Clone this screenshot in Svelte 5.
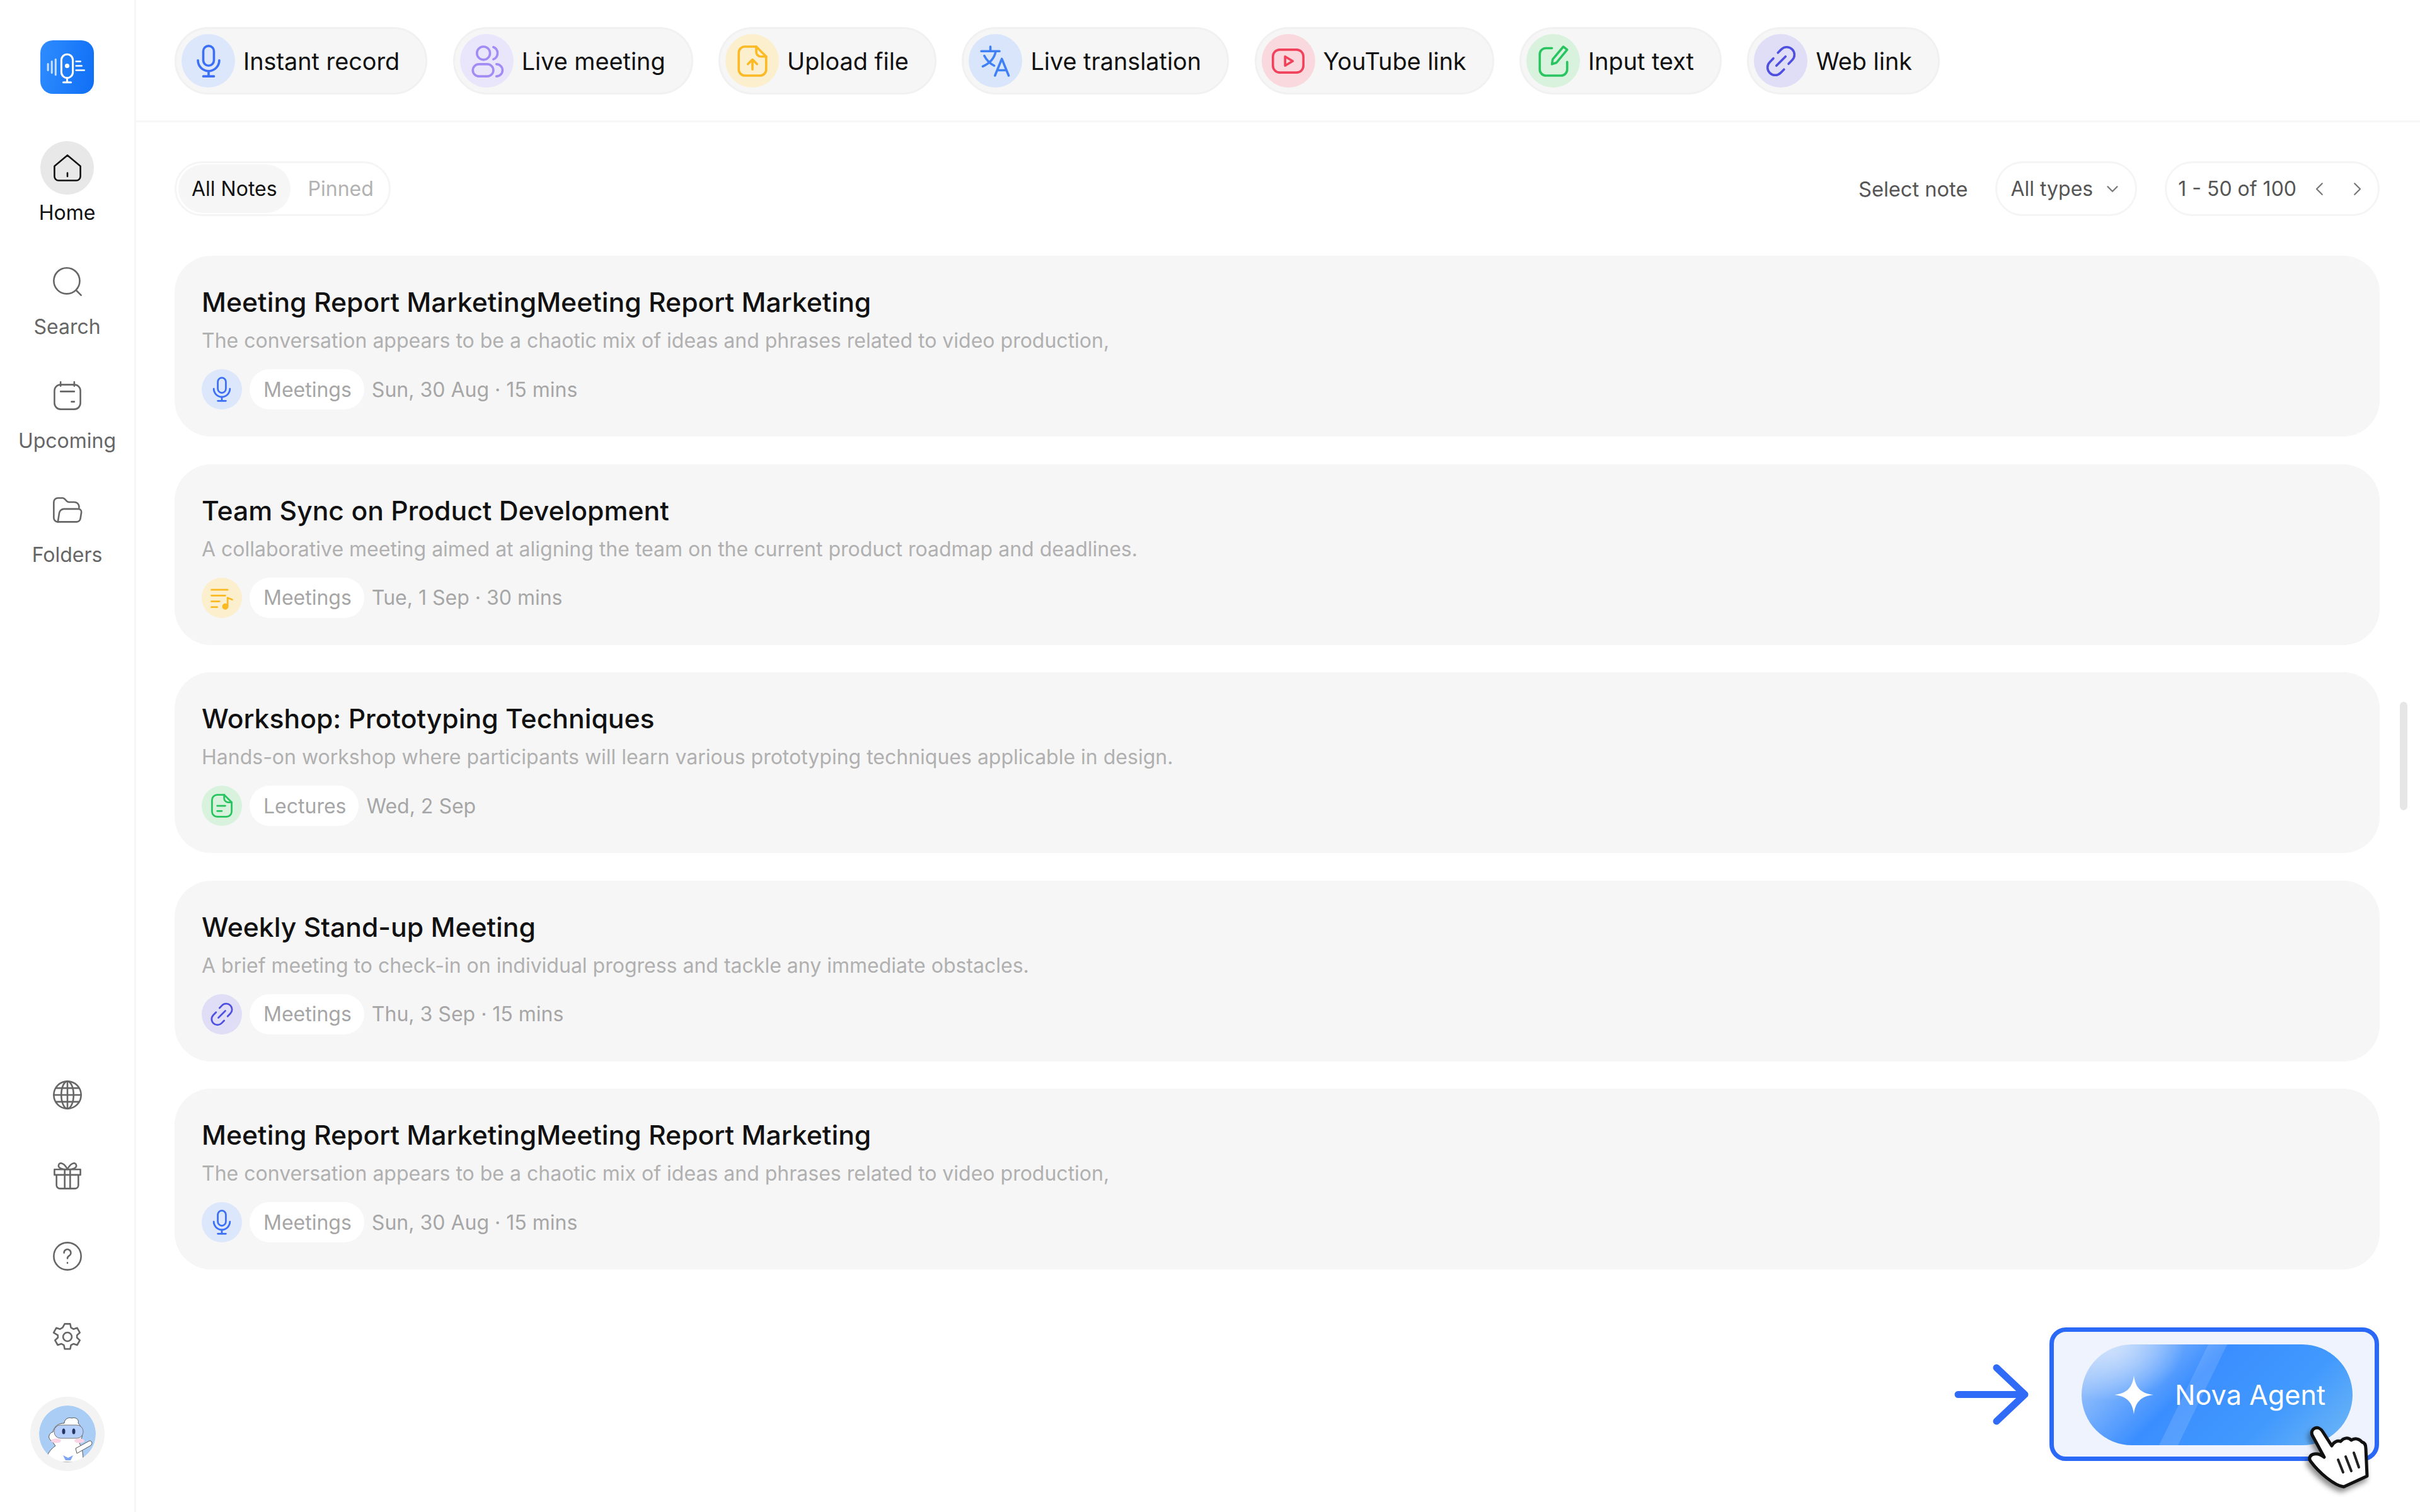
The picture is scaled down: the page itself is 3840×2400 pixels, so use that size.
<script>
  const actions = [
    { label: "Instant record", icon: "mic", tone: "blue" },
    { label: "Live meeting", icon: "people", tone: "violet" },
    { label: "Upload file", icon: "upload", tone: "yellow" },
    { label: "Live translation", icon: "translate", tone: "sky" },
    { label: "YouTube link", icon: "youtube", tone: "red" },
    { label: "Input text", icon: "pen", tone: "green" },
    { label: "Web link", icon: "link", tone: "indigo" }
  ];

  const nav = [
    { label: "Home", icon: "home", active: true },
    { label: "Search", icon: "search" },
    { label: "Upcoming", icon: "calendar" },
    { label: "Folders", icon: "folder" }
  ];

  const tools = ["globe", "gift", "help", "gear"];

  const notes = [
    {
      title: "Meeting Report MarketingMeeting Report Marketing",
      text: "The conversation appears to be a chaotic mix of ideas and phrases related to video production,",
      icon: "mic", tone: "blue", tag: "Meetings", meta: "Sun, 30 Aug · 15 mins"
    },
    {
      title: "Team Sync on Product Development",
      text: "A collaborative meeting aimed at aligning the team on the current product roadmap and deadlines.",
      icon: "music", tone: "yellow", tag: "Meetings", meta: "Tue, 1 Sep · 30 mins"
    },
    {
      title: "Workshop: Prototyping Techniques",
      text: "Hands-on workshop where participants will learn various prototyping techniques applicable in design.",
      icon: "doc", tone: "green", tag: "Lectures", meta: "Wed, 2 Sep"
    },
    {
      title: "Weekly Stand-up Meeting",
      text: "A brief meeting to check-in on individual progress and tackle any immediate obstacles.",
      icon: "link", tone: "indigo", tag: "Meetings", meta: "Thu, 3 Sep · 15 mins"
    },
    {
      title: "Meeting Report MarketingMeeting Report Marketing",
      text: "The conversation appears to be a chaotic mix of ideas and phrases related to video production,",
      icon: "mic", tone: "blue", tag: "Meetings", meta: "Sun, 30 Aug · 15 mins"
    }
  ];
</script>

{#snippet glyph(name)}
  <svg viewBox="0 0 24 24" fill="none" stroke="currentColor" stroke-width="1.5" stroke-linecap="round" stroke-linejoin="round">
    {#if name === "mic"}
      <rect x="8.5" y="2" width="7" height="13" rx="3.5" />
      <path d="M5 11.5a7 7 0 0 0 14 0M12 18.5V22M8.5 22h7" />
    {:else if name === "people"}
      <circle cx="10" cy="6.800" r="4.300" />
      <path d="M16.500 2.800a4.300 4.300 0 0 1 0 8" />
      <rect x="3" y="14" width="13.500" height="8" rx="4" />
      <path d="M18.500 14a4 4 0 0 1 0 8" />
    {:else if name === "upload"}
      <path d="M14.500 2.500H7a4 4 0 0 0-4 4v11a4 4 0 0 0 4 4h10a4 4 0 0 0 4-4V9z" />
      <path d="M14.500 2.500V6a3 3 0 0 0 3 3H21M12 17.500v-6M9 14l3-3 3 3" />
    {:else if name === "translate"}
      <path d="M2.500 5.500h12M8.500 2.500v3M12 5.500c-.8 4.500-4 8-8.500 10M4.500 8.500c1.500 3 3.500 5 6.500 6.500M11.500 21.500l4.500-11 4.500 11M13 18h6" />
    {:else if name === "youtube"}
      <rect x="2" y="4.500" width="20" height="15" rx="4.500" />
      <path d="M10 9v6l5-3z" />
    {:else if name === "pen"}
      <path d="M11 3.500H7a4 4 0 0 0-4 4v10a4 4 0 0 0 4 4h10a4 4 0 0 0 4-4v-5" />
      <path d="M18.500 2.500l2.500 2-7 8.500-3 1 .5-3.200z" />
    {:else if name === "link"}
      <path d="M10 6.500l2.200-2.200a5 5 0 0 1 7.200 7L17 13.800M14 17.500l-2.200 2.200a5 5 0 0 1-7.200-7L7 10.200M9 15l6-6" />
    {:else if name === "music"}
      <path d="M3 5h14M3 10h12M3 15h7M3 20h5" />
      <path d="M17 12v7" />
      <path d="M17 12l4 1.500" />
      <circle cx="15" cy="19.500" r="2" fill="currentColor" />
    {:else if name === "doc"}
      <path d="M14 2.500H8a4.500 4.500 0 0 0-4.500 4.500v10A4.500 4.500 0 0 0 8 21.500h8a4.500 4.500 0 0 0 4.500-4.500V9z" />
      <path d="M14 2.500V5.500a3.500 3.500 0 0 0 3.500 3.500h3M8 12h7M8 16.500h4" />
    {:else if name === "home"}
      <path d="M2.500 10.500L12 2.500l9.500 8V18a3 3 0 0 1-3 3h-13a3 3 0 0 1-3-3z" />
      <path d="M12 15.500V18" />
    {:else if name === "search"}
      <circle cx="11.500" cy="11" r="9.500" />
      <path d="M18.500 18l3.500 3.500" />
    {:else if name === "calendar"}
      <rect x="2.500" y="3.500" width="19" height="18" rx="4.500" />
      <path d="M7 1.500v3M17 1.500v3M7 8.500h10M15 16h2" />
    {:else if name === "folder"}
      <path d="M5 20.500a3 3 0 0 1-3-3V6a3 3 0 0 1 3-3h3.500c2 0 2.500 3 4.500 3h4a3.500 3.500 0 0 1 3.500 3v1" />
      <path d="M5 20.500l1-6.500a3.500 3.500 0 0 1 3.500-3H20a2.200 2.200 0 0 1 2.200 2.600l-.7 4.400a3 3 0 0 1-3 2.500z" />
    {:else if name === "globe"}
      <circle cx="12" cy="12" r="10" />
      <ellipse cx="12" cy="12" rx="4.500" ry="10" />
      <path d="M12 2v20M2 12h20M3.500 7h17M3.500 17h17" />
    {:else if name === "gift"}
      <path d="M2.500 7.500h19v4h-19zM4 11.500V19a2.500 2.500 0 0 0 2.500 2.500h11A2.500 2.500 0 0 0 20 19v-7.500M10 7.500v14M14 7.500v14" />
      <path d="M12 7.500C10 3 6 1.500 5.500 4.500 5.200 6.500 8 7.500 12 7.500zM12 7.500C14 3 18 1.500 18.500 4.500 18.800 6.500 16 7.500 12 7.500z" />
    {:else if name === "help"}
      <circle cx="12" cy="12" r="10" />
      <path d="M9.500 9.500a2.500 2.500 0 1 1 3.800 2.100c-.8.500-1.300 1-1.300 2M12 16.800v.2" />
    {:else if name === "gear"}
      <circle cx="12" cy="12" r="3.200" />
      <path d="M10 2.500h4l.6 2.800 1.800 1 2.700-.9 2 3.500-2.100 1.900v1.800l2.100 1.900-2 3.500-2.700-.9-1.800 1-.6 2.800h-4l-.6-2.800-1.800-1-2.700.9-2-3.500 2.100-1.900v-1.800L1.900 8.900l2-3.500 2.700.9 1.800-1z" />
    {/if}
  </svg>
{/snippet}

<div class="app">
  <aside class="sidebar">
    <div class="logo">
      <svg viewBox="0 0 84 84" fill="none" stroke="#fff" stroke-linecap="round">
        <path d="M12 37v10M18 33v18M24 30v24" stroke-width="3" opacity=".75" />
        <rect x="33" y="22" width="18" height="37" rx="9" stroke-width="3" />
        <circle cx="42" cy="40" r="3.500" fill="#fff" stroke="none" />
        <path d="M42 59v6M36 66h12" stroke-width="3" />
        <path d="M56 33h7M56 40h9M56 47h13" stroke-width="2.500" />
      </svg>
    </div>

    <nav class="nav">
      {#each nav as item}
        <div class="nav-item" class:active={item.active}>
          <span class="nav-icon">{@render glyph(item.icon)}</span>
          <span>{item.label}</span>
        </div>
      {/each}
    </nav>

    <div class="tools">
      {#each tools as tool}
        <span class="tool">{@render glyph(tool)}</span>
      {/each}
      <div class="avatar">
        <svg viewBox="0 0 90 90">
          <circle cx="45" cy="45" r="45" fill="#a9cdf5" />
          <path d="M10 90c2-14 10-22 16-26l-6-8c-6-2-6-12 2-14 2-10 10-14 18-14 0-6 6-10 12-8 6-2 12 2 10 8 6 6 8 14 6 22l-4 10c4 6 6 14 6 30z" fill="#fff" stroke="#555" stroke-width="1" />
          <path d="M58 68l22-12c5 0 5 6 1 8L60 76z" fill="#fff" stroke="#555" stroke-width="1" />
          <rect x="24" y="31" width="46" height="21" rx="10" fill="#b5d0fb" stroke="#777" stroke-width="1" />
          <ellipse cx="39" cy="41" rx="2.500" ry="4.500" fill="#26365f" />
          <ellipse cx="55" cy="41" rx="2.500" ry="4.500" fill="#26365f" />
          <ellipse cx="27" cy="56" rx="8" ry="3.500" fill="#fbd3e4" />
          <ellipse cx="64" cy="56" rx="8" ry="3.500" fill="#fbd3e4" />
          <path d="M38 79l8 4 8-4-4 8h-8z" fill="#7ea6f0" />
        </svg>
      </div>
    </div>
  </aside>

  <main class="main">
    <header class="actions">
      {#each actions as action}
        <button class="chip">
          <span class="badge {action.tone}">{@render glyph(action.icon)}</span>
          {action.label}
        </button>
      {/each}
    </header>

    <section class="content">
      <div class="filters">
        <div class="tabs">
          <span class="tab current">All Notes</span>
          <span class="tab">Pinned</span>
        </div>
        <div class="filter-right">
          <span class="select-note">Select note</span>
          <div class="outline types">
            All types
            <svg class="chev" viewBox="0 0 24 24"><path d="M6 9l6 6 6-6" /></svg>
          </div>
          <div class="outline pager">
            1 - 50 of 100
            <svg class="chev" viewBox="0 0 24 24"><path d="M15 5l-7 7 7 7" /></svg>
            <svg class="chev next" viewBox="0 0 24 24"><path d="M9 5l7 7-7 7" /></svg>
          </div>
        </div>
      </div>

      <div class="notes">
        {#each notes as note}
          <article class="note">
            <h3>{note.title}</h3>
            <p>{note.text}</p>
            <div class="note-meta">
              <span class="badge small {note.tone}">{@render glyph(note.icon)}</span>
              <span class="tag">{note.tag}</span>
              <span class="when">{note.meta}</span>
            </div>
          </article>
        {/each}
      </div>
    </section>
  </main>

  <div class="scrollbar"></div>

  <svg class="arrow" viewBox="0 0 119 97" fill="none" stroke="#2f6bf6" stroke-width="11" stroke-linecap="round" stroke-linejoin="round">
    <path d="M6 48.500h106M67 6l45 42.500L67 91" />
  </svg>

  <div class="agent-frame">
    <button class="agent">
      <svg class="spark" viewBox="0 0 62 62"><path d="M31 0c2 19 11 29 31 31-20 2-29 12-31 31-2-19-11-29-31-31 20-2 29-12 31-31z" /></svg>
      Nova Agent
    </button>
  </div>

  <svg class="hand" viewBox="0 0 120 120">
    <path d="M23 17c5-2 10 1 13 6l14 22c3-6 9-9 14-7 5-6 12-7 17-2 6-4 13-2 17 3 4 1 6 5 6 10l2 44-37 17C54 108 30 88 16 69c-3-5 0-10 6-11 5-1 11 1 16 5L19 28c-2-5 0-9 4-11z"
      fill="#fff" stroke="#111" stroke-width="5" stroke-linejoin="round" />
    <path d="M60 67l8 20M72 62l9 23M85 56l8 23" stroke="#222" stroke-width="4" stroke-linecap="round" />
  </svg>
</div>

<style>
  :global(body) {
    margin: 0;
    background: #fff;
  }

  .app {
    position: relative;
    display: flex;
    width: 3840px;
    height: 2400px;
    overflow: hidden;
    font-family: Inter, "Liberation Sans", sans-serif;
    color: #111;
  }

  /* sidebar */
  .sidebar {
    box-sizing: border-box;
    flex: none;
    width: 216px;
    height: 100%;
    padding: 64px 0 65px;
    display: flex;
    flex-direction: column;
    align-items: center;
    border-right: 3px solid #f7f7f7;
  }

  .logo {
    width: 85px;
    height: 85px;
    border-radius: 20px;
    background: linear-gradient(100deg, #2f8cff, #0f6ff5);
    flex: none;
  }

  .logo svg,
  .avatar svg {
    display: block;
    width: 100%;
    height: 100%;
  }

  .nav {
    display: flex;
    flex-direction: column;
    gap: 44px;
    margin-top: 75px;
  }

  .nav-item {
    display: flex;
    flex-direction: column;
    align-items: center;
    gap: 6px;
    font-size: 32px;
    line-height: 46px;
    color: #666;
  }

  .nav-item.active {
    color: #111;
  }

  .nav-icon {
    width: 85px;
    height: 85px;
    border-radius: 50%;
    display: flex;
    align-items: center;
    justify-content: center;
  }

  .nav-icon svg {
    width: 52px;
    height: 52px;
    stroke-width: 1.2;
  }

  .active .nav-icon {
    background: #e8e8e8;
  }

  .tools {
    margin-top: auto;
    display: flex;
    flex-direction: column;
    align-items: center;
    gap: 80px;
    color: #666;
  }

  .tool {
    width: 52px;
    height: 48px;
    display: flex;
    align-items: center;
    justify-content: center;
  }

  .tool svg {
    width: 52px;
    height: 52px;
    stroke-width: 1.2;
  }

  .avatar {
    box-sizing: border-box;
    width: 118px;
    height: 118px;
    margin-top: -9px;
    padding: 14px;
    border-radius: 50%;
    background: #f3f3f3;
    overflow: hidden;
  }

  .avatar svg {
    border-radius: 50%;
  }

  /* main column */
  .main {
    flex: 1;
    min-width: 0;
  }

  .actions {
    box-sizing: border-box;
    height: 194px;
    padding: 43px 61px 0;
    display: flex;
    align-items: flex-start;
    gap: 40.5px;
    border-bottom: 3px solid #f7f7f7;
  }

  .chip {
    box-sizing: border-box;
    height: 107px;
    padding: 0 41px 0 8px;
    display: flex;
    align-items: center;
    gap: 13px;
    border: 3px solid #f1f1f1;
    border-radius: 54px;
    background: #f6f6f6;
    font: inherit;
    font-size: 37.8px;
    color: #111;
    white-space: nowrap;
  }

  .badge {
    flex: none;
    width: 85px;
    height: 85px;
    border-radius: 50%;
    display: flex;
    align-items: center;
    justify-content: center;
  }

  .badge svg {
    width: 58px;
    height: 58px;
  }

  .badge.small {
    width: 64px;
    height: 64px;
  }

  .badge.small svg {
    width: 44px;
    height: 44px;
  }

  .blue { background: #dde7fc; color: #3b6ff5; }
  .violet { background: #e9e6fb; color: #a28bf5; }
  .yellow { background: #fbefcd; color: #fbb924; }
  .sky { background: #d8e5fb; color: #3f80f6; }
  .red { background: #f9d9dd; color: #f0425a; }
  .green { background: #d9f2dd; color: #27c45f; }
  .indigo { background: #dfdef6; color: #4f4fe0; }

  .content {
    padding: 62px 64px 0 61px;
  }

  .filters {
    display: flex;
    justify-content: space-between;
    align-items: center;
    height: 87px;
    font-size: 32px;
  }

  .tabs {
    box-sizing: border-box;
    height: 87px;
    padding: 2px 3px;
    display: flex;
    align-items: center;
    border: 3px solid #f5f5f5;
    border-radius: 44px;
  }

  .tab {
    height: 77px;
    padding: 0 21px;
    display: flex;
    align-items: center;
    border-radius: 39px;
    color: #b2b2b2;
  }

  .tab.current {
    margin-right: 7px;
    background: #f6f6f6;
    color: #111;
  }

  .filter-right {
    display: flex;
    align-items: center;
    color: #555;
  }

  .select-note {
    margin-right: 44px;
    font-size: 32.6px;
  }

  .outline {
    box-sizing: border-box;
    height: 87px;
    padding: 0 21px;
    display: flex;
    align-items: center;
    border: 3px solid #f5f5f5;
    border-radius: 44px;
  }

  .types {
    gap: 16px;
    margin-right: 44px;
  }

  .pager {
    gap: 22px;
    padding: 0 18px;
  }

  .chev {
    width: 30px;
    height: 30px;
    fill: none;
    stroke: #777;
    stroke-width: 1.8;
    stroke-linecap: round;
    stroke-linejoin: round;
  }

  .chev.next {
    margin-left: 7px;
  }

  .notes {
    margin-top: 63px;
    display: flex;
    flex-direction: column;
    gap: 43.6px;
  }

  .note {
    box-sizing: border-box;
    height: 287px;
    padding: 47px 43px 0;
    border-radius: 58px;
    background: #f6f6f6;
  }

  h3 {
    margin: 0;
    font-size: 42.7px;
    font-weight: 500;
    line-height: 54px;
    color: #111;
  }

  .note p {
    margin: 9px 0 0;
    font-size: 32px;
    line-height: 50px;
    color: #b0b0b0;
  }

  .note-meta {
    margin-top: 20px;
    display: flex;
    align-items: center;
    gap: 12px;
    font-size: 32px;
    color: #a6a6a6;
  }

  .tag {
    height: 64px;
    padding: 0 20px 0 22px;
    display: flex;
    align-items: center;
    border-radius: 32px;
    background: #fff;
  }

  /* overlays */
  .scrollbar {
    position: absolute;
    left: 3808px;
    top: 1114px;
    width: 12px;
    height: 172px;
    border-radius: 6px;
    background: #e6e6e6;
  }

  .arrow {
    position: absolute;
    left: 3101px;
    top: 2165px;
    width: 119px;
    height: 97px;
  }

  .agent-frame {
    box-sizing: border-box;
    position: absolute;
    left: 3252px;
    top: 2107px;
    width: 523px;
    height: 212px;
    padding: 20px 36px 0 44px;
    border: 7px solid #2a68f8;
    border-radius: 26px;
    background: #eff3fd;
  }

  .agent {
    position: relative;
    width: 430px;
    height: 160px;
    padding: 0 0 0 52px;
    display: flex;
    align-items: center;
    gap: 34px;
    border: none;
    border-radius: 80px;
    overflow: hidden;
    font: inherit;
    font-size: 43.2px;
    color: #fff;
    background:
      radial-gradient(ellipse 120px 90px at 10% 0%, #d0e2fc, transparent),
      linear-gradient(135deg, #a9cbfb 5%, #3b8eff 40%, #4199fd 70%, #70b8f6 100%);
  }

  .agent::before {
    content: "";
    position: absolute;
    top: 0;
    bottom: 0;
    left: 162px;
    width: 30px;
    transform: skewX(-26deg);
    background: rgba(255, 255, 255, 0.13);
  }

  .spark {
    width: 62px;
    height: 62px;
    fill: #fff;
    position: relative;
  }

  .hand {
    position: absolute;
    left: 3650px;
    top: 2250px;
    width: 120px;
    height: 120px;
    filter: drop-shadow(-3px 6px 4px rgba(0, 0, 0, 0.45));
  }
</style>
